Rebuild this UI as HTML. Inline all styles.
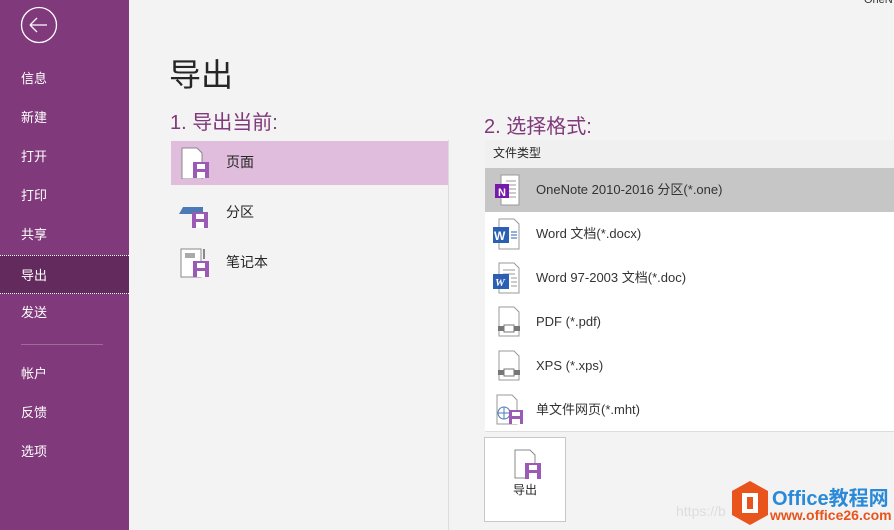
<!DOCTYPE html>
<html><head><meta charset="utf-8"><style>
*{margin:0;padding:0;box-sizing:border-box}
html,body{width:894px;height:530px;overflow:hidden}
body{background:#f3f3f3;font-family:"Liberation Sans","Noto Sans CJK SC",sans-serif;position:relative;color:#262626}
.sb{position:absolute;left:0;top:0;width:129px;height:530px;background:#80397b}
.sb .it{position:absolute;left:0;width:129px;height:39px;color:#fff;font-size:13px;padding-left:21px;line-height:39px}
.sb .sel{background:#632a5e;border-top:1px dotted #fff;border-bottom:1px dotted #fff}
.abs{position:absolute;white-space:nowrap}
.row{position:absolute;left:485px;width:409px;height:44px;font-size:13px;line-height:44px;padding-left:51px;color:#333;white-space:nowrap}
.ic{position:absolute;left:8px;top:6px}
</style></head><body>
<div class="sb">
<svg class="abs" style="left:20px;top:6px" width="38" height="38"><circle cx="19" cy="19" r="17.5" fill="none" stroke="#fff" stroke-width="1.3"/><path d="M10 19h17M10 19l7-7M10 19l7 7" stroke="#fff" stroke-width="1.3" fill="none"/></svg>
<div class="it" style="top:59px">信息</div>
<div class="it" style="top:98px">新建</div>
<div class="it" style="top:137px">打开</div>
<div class="it" style="top:176px">打印</div>
<div class="it" style="top:215px">共享</div>
<div class="it sel" style="top:255px">导出</div>
<div class="it" style="top:293px">发送</div>
<div class="abs" style="left:21px;top:344px;width:82px;height:1px;background:#a06a9b"></div>
<div class="it" style="top:354px">帐户</div>
<div class="it" style="top:393px">反馈</div>
<div class="it" style="top:432px">选项</div>
</div>
<div class="abs" style="left:864px;top:-6px;font-size:11px;color:#333">OneN</div>
<div class="abs" style="left:169px;top:50px;font-size:32px;color:#262626">导出</div>
<div class="abs" style="left:170px;top:106px;font-size:20px;color:#80397b">1. 导出当前:</div>
<div class="abs" style="left:484px;top:110px;font-size:20px;color:#80397b">2. 选择格式:</div>
<div class="abs" style="left:448px;top:140px;width:1px;height:390px;background:#dcdcdc"></div>
<div class="abs" style="left:171px;top:141px;width:277px;height:44px;background:#e0bcdd"></div>
<svg class="abs" style="left:180px;top:147px" width="30" height="32"><path d="M2 1h15l5 5v26H2z" fill="#fff" stroke="#888"/><rect x="13" y="15" width="16" height="16" fill="#9b5bb5"/><rect x="17" y="17" width="8" height="5" fill="#fff"/><rect x="17" y="25" width="8" height="6" fill="#fff"/></svg>
<div class="abs" style="left:226px;top:152px;font-size:14px">页面</div>
<svg class="abs" style="left:178px;top:200px" width="32" height="30"><path d="M1 14l4-7h20v7z" fill="#4a7bb7"/><rect x="14" y="12" width="16" height="16" fill="#9b5bb5"/><rect x="18" y="14" width="8" height="5" fill="#fff"/><rect x="18" y="22" width="8" height="6" fill="#fff"/></svg>
<div class="abs" style="left:226px;top:202px;font-size:14px">分区</div>
<svg class="abs" style="left:180px;top:248px" width="30" height="32"><rect x="1" y="1" width="20" height="28" fill="#fff" stroke="#888"/><rect x="5" y="5" width="10" height="5" fill="#aaa"/><rect x="23" y="1" width="2" height="10" fill="#888"/><rect x="13" y="13" width="16" height="16" fill="#9b5bb5"/><rect x="17" y="15" width="8" height="5" fill="#fff"/><rect x="17" y="23" width="8" height="6" fill="#fff"/></svg>
<div class="abs" style="left:226px;top:252px;font-size:14px">笔记本</div>
<div class="abs" style="left:485px;top:140px;width:409px;height:292px;background:#fff;border-bottom:1px solid #ddd"></div>
<div class="abs" style="left:485px;top:140px;width:409px;height:28px;background:#f0f0f0;font-size:12px;line-height:26px;padding-left:8px">文件类型</div>
<div class="row" style="top:168px;background:#c6c6c6"><svg class="ic" width="30" height="32"><path d="M8 1h18v30H8z" fill="#fff" stroke="#999"/><path d="M13 7h10M13 11h10M13 15h10M13 19h10M13 23h10" stroke="#999"/><rect x="2" y="10" width="14" height="14" fill="#7719aa"/><text x="5" y="22" font-size="11" font-weight="bold" fill="#fff" font-family="Liberation Sans">N</text></svg>OneNote 2010-2016 分区(*.one)</div>
<div class="row" style="top:212px"><svg class="ic" width="30" height="32"><path d="M6 1h15l5 5v25H6z" fill="#fff" stroke="#999"/><rect x="0" y="9" width="16" height="16" fill="#2b5fb3"/><text x="1" y="22" font-size="12" font-weight="bold" fill="#fff" font-family="Liberation Sans">W</text><path d="M18 14h6M18 17h6M18 20h6" stroke="#2b5fb3"/></svg>Word 文档(*.docx)</div>
<div class="row" style="top:256px"><svg class="ic" width="30" height="32"><path d="M6 1h15l5 5v25H6z" fill="#fff" stroke="#999"/><path d="M10 8h12M10 12h12M18 16h6M18 20h6M18 24h6" stroke="#999"/><rect x="0" y="12" width="16" height="15" fill="#2b5fb3"/><text x="2" y="24" font-size="11" font-style="italic" font-weight="bold" fill="#fff" font-family="Liberation Serif">W</text></svg>Word 97-2003 文档(*.doc)</div>
<div class="row" style="top:300px"><svg class="ic" width="30" height="32"><path d="M6 1h15l5 5v24H6z" fill="#fff" stroke="#999"/><rect x="5" y="20" width="22" height="5" fill="#777"/><rect x="11" y="19" width="10" height="7" fill="#fff" stroke="#777"/></svg>PDF (*.pdf)</div>
<div class="row" style="top:344px"><svg class="ic" width="30" height="32"><path d="M6 1h15l5 5v24H6z" fill="#fff" stroke="#999"/><rect x="5" y="20" width="22" height="5" fill="#777"/><rect x="11" y="19" width="10" height="7" fill="#fff" stroke="#777"/></svg>XPS (*.xps)</div>
<div class="row" style="top:388px"><svg class="ic" width="32" height="32"><path d="M4 1h15l5 5v24H4z" fill="#fff" stroke="#999"/><circle cx="11" cy="19" r="6" fill="none" stroke="#4a7bb7"/><path d="M5 19h12M11 13v12" stroke="#4a7bb7"/><rect x="16" y="16" width="14" height="14" fill="#9b5bb5"/><rect x="19" y="18" width="8" height="4" fill="#fff"/><rect x="19" y="25" width="8" height="5" fill="#fff"/></svg>单文件网页(*.mht)</div>
<div class="abs" style="left:484px;top:437px;width:82px;height:85px;background:#fff;border:1px solid #c8c8c8"></div>
<svg class="abs" style="left:513px;top:449px" width="30" height="32"><path d="M2 1h15l5 5v23H2z" fill="#fff" stroke="#888"/><rect x="12" y="14" width="16" height="16" fill="#9b5bb5"/><rect x="16" y="16" width="8" height="5" fill="#fff"/><rect x="16" y="24" width="8" height="6" fill="#fff"/></svg>
<div class="abs" style="left:513px;top:481px;font-size:12px">导出</div>
<div class="abs" style="left:676px;top:503px;font-size:14px;color:#ddd">https://b</div>
<svg class="abs" style="left:730px;top:480px" width="40" height="46"><path d="M20 1l18 10v24L20 45 2 35V11z" fill="#e8541c"/><rect x="12" y="13" width="16" height="20" fill="#fff"/><rect x="17" y="17" width="6" height="12" fill="#e8541c"/></svg>
<div class="abs" style="left:772px;top:482px;font-size:20px;font-weight:bold;color:#2a8ad8">Office教程网</div>
<div class="abs" style="left:770px;top:507px;font-size:14px;font-weight:bold;color:#e8541c">www.office26.com</div>
</body></html>
